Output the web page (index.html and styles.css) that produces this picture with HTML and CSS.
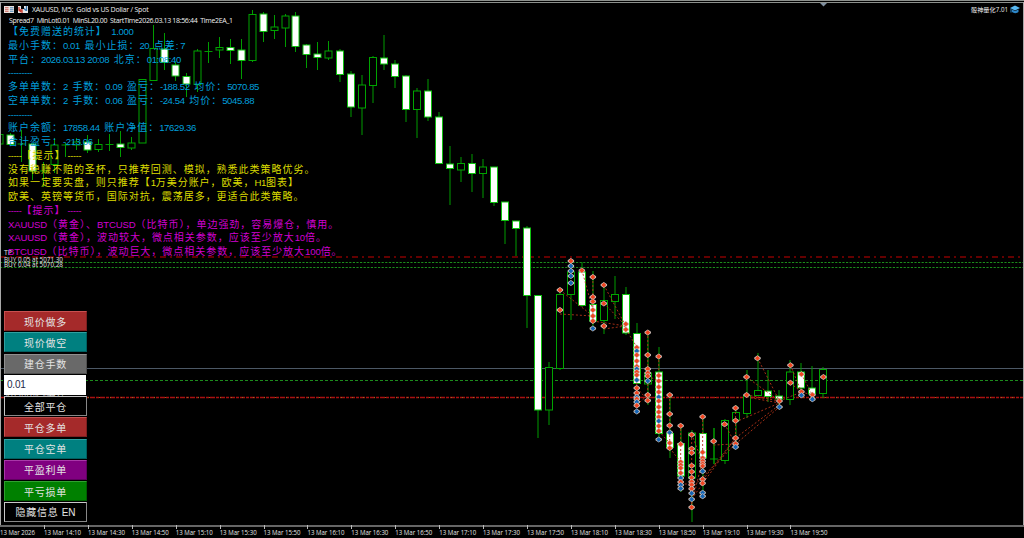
FILE: index.html
```html
<!DOCTYPE html>
<html lang="zh-CN">
<head>
    <meta charset="UTF-8">
    <meta name="viewport" content="width=device-width, initial-scale=1.0">
    <title>XAUUSD, M5</title>
    <link rel="stylesheet" href="styles.css">
</head>
<body>
    <div class="chart">
        <svg id="plot" class="plot" width="1024" height="538" viewBox="0 0 1024 538"></svg>

        <header class="title_bar">
            <svg width="24" height="10" viewBox="0 0 24 10">
                <rect x="0" y="1" width="10" height="7" fill="#e8e0dc" />
                <rect x="1" y="2" width="3.500" height="5" fill="#d08078" />
                <rect x="6" y="2" width="3.500" height="5" fill="#6f9cc0" />
                <path d="M0 3.500h10M0 5.500h10" stroke="#f4e6e2" stroke-width=".6" />
                <path d="M14 1h3v3h3V1h4v7h-10z" fill="#e8e8e8" />
                <path d="M15 2v3h3v3M15 5l2 2" stroke="#c8392b" stroke-width="1.3" fill="none" />
                <path d="M22.500 1v5M20 3.500l2 2" stroke="#3b78b0" stroke-width="1.3" fill="none" />
            </svg>
            <span class="symbol">XAUUSD, M5:&nbsp; Gold vs US Dollar / Spot</span>
            <span class="expert">骰神量化7.01</span>
            <svg width="11" height="9" viewBox="0 0 11 9">
                <path d="M0 3l5-2.500 5 2.500-5 2.500z" fill="#57b7f0" />
                <path d="M2 4.500v2.500c2 1.500 4 1.500 6.500 0V4.500L5 6z" fill="#2c86c8" />
                <path d="M1 3.500v4" stroke="#2c86c8" />
            </svg>
        </header>

        <div class="spread">Spread7&nbsp; MinLot0.01&nbsp; MinSL20.00&nbsp; StartTime2026.03.13 18:56:44&nbsp; Time2EA_1</div>

        <div class="stats">
            <p>【免费赠送的统计】<i>&nbsp; 1.000</i></p>
            <p>最小手数：<i>0.01 &nbsp;</i>最小止损：<i>20 &nbsp;</i>点差<i>: 7</i></p>
            <p>平台：<i>2026.03.13 20:08 &nbsp;</i>北京：<i>01:08:40</i></p>
            <p><i class="rule">---------</i></p>
            <p>多单单数：<i>2 &nbsp;</i>手数：<i>0.09 &nbsp;</i>盈亏：<i>-188.52 &nbsp;</i>均价：<i>5070.85</i></p>
            <p>空单单数：<i>2 &nbsp;</i>手数：<i>0.06 &nbsp;</i>盈亏：<i>-24.54 &nbsp;</i>均价：<i>5045.88</i></p>
            <p><i class="rule">---------</i></p>
            <p>账户余额：<i>17858.44 &nbsp;</i>账户净值：<i>17629.36</i></p>
            <p>合计盈亏：<i>-213.06</i></p>
            <p class="tip"><i class="rule">-----</i>【提示】<i class="rule"> -----</i></p>
            <p class="tip">没有稳赚不赔的圣杯，只推荐回测、模拟，熟悉此类策略优劣。</p>
            <p class="tip">如果一定要实盘，则只推荐【<i>1</i>万美分账户，欧美，<i>H1</i>图表】</p>
            <p class="tip">欧美、英镑等货币，国际对抗，震荡居多，更适合此类策略。</p>
            <p class="warn"><i class="rule">-----</i>【提示】<i class="rule"> -----</i></p>
            <p class="warn"><i>XAUUSD</i>（黄金）、<i>BTCUSD</i>（比特币），单边强劲，容易爆仓，慎用。</p>
            <p class="warn"><i>XAUUSD</i>（黄金），波动较大，微点相关参数，应该至少放大<i>10</i>倍。</p>
            <p class="warn"><i>BTCUSD</i>（比特币），波动巨大，微点相关参数，应该至少放大<i>100</i>倍。</p>
        </div>

        <div class="panel">
            <button class="red">现价做多</button>
            <button class="teal">现价做空</button>
            <button class="gray">建仓手数</button>
            <input type="text" value="0.01">
            <button class="black">全部平仓</button>
            <button class="red">平仓多单</button>
            <button class="teal">平仓空单</button>
            <button class="purple">平盈利单</button>
            <button class="green">平亏损单</button>
            <button class="black">隐藏信息 <i>EN</i></button>
        </div>
    </div>

    <script src="chart.js"></script>
</body>
</html>
```
FILE: styles.css
```css
body {
    margin: 0;
    background-color: #000;
}
.chart {
    position: relative;
    box-sizing: border-box;
    width: 1024px;
    height: 538px;
    overflow: hidden;
    background-color: #000;
    font-family: "Liberation Sans", "Noto Sans CJK SC", sans-serif;
}
.plot {
    position: absolute;
    top: 0;
    left: 0;
}
.plot text {
    font-family: "Open Sans", "Noto Sans", sans-serif;
    font-size: 7px;
    fill: #e4e4e4;
}
.title_bar {
    position: relative;
    display: flex;
    align-items: center;
    height: 11px;
    padding: 4px 3px 0 4px;
    color: #f0f0f0;
    font-family: "Open Sans", "Noto Sans CJK SC", sans-serif;
    font-size: 7px;
}
.symbol {
    flex: 1;
    margin-left: 4px;
    letter-spacing: -0.21px;
}
.expert {
    margin-right: 2px;
    font-size: 6.2px;
}
.spread {
    position: relative;
    height: 9px;
    padding-left: 9px;
    color: #f0f0f0;
    font-family: "Open Sans", sans-serif;
    font-size: 7px;
    line-height: 11px;
    letter-spacing: -0.34px;
    white-space: pre;
}
.stats {
    position: relative;
    padding-left: 8px;
    color: #009fdc;
    font-family: "Noto Sans CJK SC", sans-serif;
    font-size: 10px;
    letter-spacing: 0.98px;
}
.stats p {
    height: 13.75px;
    margin: 0;
    line-height: 13px;
    white-space: pre;
}
.stats i {
    font-family: "Liberation Sans", sans-serif;
    font-size: 9.6px;
    font-style: normal;
    letter-spacing: -0.4px;
}
.stats .rule {
    font-size: 9px;
    letter-spacing: -0.3px;
}
.stats .tip {
    color: #dcdc00;
}
.stats .warn {
    color: #d000d0;
}
.stats .warn i {
    letter-spacing: -0.15px;
}
.stats .warn .rule {
    letter-spacing: -0.3px;
}
.panel {
    position: absolute;
    top: 311px;
    left: 4px;
    display: flex;
    flex-direction: column;
    row-gap: 1.25px;
    width: 83px;
}
.panel button,
.panel input {
    box-sizing: border-box;
    width: 100%;
    height: 20px;
    padding: 0;
    border: 1px solid;
    border-radius: 0;
    color: #e4e4e4;
    font-family: "Noto Sans CJK SC", sans-serif;
    font-size: 10px;
    line-height: 17px;
    letter-spacing: 0.8px;
}
.panel input {
    width: 82px;
    padding-left: 2px;
    border-color: #fff;
    background-color: #fff;
    color: #222a4a;
    font-family: "Liberation Sans", sans-serif;
    letter-spacing: -0.2px;
}
.panel i {
    font-family: "Liberation Sans", sans-serif;
    font-style: normal;
    letter-spacing: 0;
}
.panel .red {
    border-color: #c85050 #7d2020 #7d2020 #c85050;
    background-color: #a52a2a;
}
.panel .teal {
    border-color: #30a0a0 #006060 #006060 #30a0a0;
    background-color: #008080;
}
.panel .gray {
    border-color: #909090 #505050 #505050 #909090;
    background-color: #696969;
}
.panel .purple {
    border-color: #a838a8 #600060 #600060 #a838a8;
    background-color: #800080;
}
.panel .green {
    border-color: #30a030 #006000 #006000 #30a030;
    background-color: #008000;
}
.panel .black {
    border-color: #c8c8c8 #888 #888 #c8c8c8;
    background-color: #000;
}
```
FILE: chart.js
```js
const plot = document.querySelector('#plot')
const STEP = 10.977

// [high, body top, body bottom, low, 1 = falling]
const candles = [
    [134, 134.5, 144, 144, 0], [133, 135, 144.5, 146, 1], [130, 144, 144, 162, 0], [143, 144, 171, 180, 1],
    [162, 171, 171, 187, 0], [138, 145, 164.5, 173, 0], [143, 145, 145, 157, 0], [138, 142, 145, 150, 0],
    [135, 142, 150, 153, 1], [139, 144.5, 149.5, 152, 0], [134, 144.5, 144.5, 151, 0], [131, 144, 147.5, 157, 1],
    [137, 143, 148, 150, 0], [79, 79.5, 143, 143, 0], [25, 48.5, 80.5, 81, 0], [33, 49, 62.5, 70, 1],
    [62, 65, 76, 81, 1], [73, 76.5, 84, 97, 1], [49, 51, 84.5, 92, 0], [42, 51.5, 51.5, 63, 0],
    [37, 47.5, 50, 58, 0], [39, 47.5, 50.5, 64, 1], [39, 50, 60.5, 79, 1], [10, 14.5, 60.5, 62, 0],
    [12, 14, 31.5, 42, 1], [15, 27, 30.5, 39, 0], [14, 16, 28, 47, 0], [12, 16, 46.5, 52, 1],
    [44, 45, 54.5, 68, 1], [42, 54, 57.5, 70, 1], [41, 51, 58, 60, 0], [49, 51, 74.5, 82, 1],
    [71, 74, 107, 117, 1], [75, 85, 108, 135, 0], [56, 57.5, 85.5, 103, 0], [35, 58, 64, 70, 1],
    [60, 64, 76.5, 88, 1], [75, 76, 109.5, 122, 1], [88, 91, 109.5, 138, 0], [79, 91, 117, 121, 1],
    [112, 117, 163.5, 164, 1], [146, 164, 168.5, 205, 1], [157, 163.5, 170, 182, 0], [154, 163.5, 173.5, 192, 1],
    [159, 167, 173.5, 198, 0], [167, 167, 202.5, 206, 1], [202, 202, 220.5, 244, 1], [221, 221, 228.5, 256, 1],
    [226, 228, 295.5, 328, 1], [295, 295.5, 410, 438, 1], [362, 367.5, 410, 425, 0], [288, 294.5, 368.5, 370, 0],
    [260, 272, 294.5, 320, 0], [262, 272, 305.5, 307, 1], [271, 304.5, 321, 330, 1], [283, 300.5, 320.5, 334, 0],
    [276, 294.5, 301.5, 319, 0], [287, 294.5, 333, 335, 1], [323, 333.5, 383.5, 384, 1], [332, 373, 384, 405, 0],
    [347, 372, 433.5, 440, 1], [393, 433.5, 447.5, 458, 1], [425, 443.5, 476, 492, 1], [430, 433, 478, 522, 0],
    [415, 433.5, 458, 498, 1], [428, 459, 459, 464, 0], [419, 420.5, 460.5, 464, 0], [405, 412.5, 420.5, 446, 0],
    [370, 395.5, 413.5, 418, 0], [353, 390.5, 395.5, 396, 0], [370, 391, 396.5, 402, 1], [390, 396, 399, 408, 1],
    [360, 372, 399.5, 405, 0], [363, 372, 388, 395, 1], [366, 388, 394, 400, 1], [367, 369.5, 393.5, 398, 0]
]

// deals per bar, negative = blue arrow
const deals = {
    51: [290, 310],
    52: [261, -266, -271, -276, -283],
    53: [270.5],
    54: [277, 297, 301.5, 310, 316, 321, -328.5],
    55: [285, 303.5, 326],
    57: [324, 329.5],
    58: [347.5, -351, 355, 361, 366.5, -369, 372, 375, -380, 388, 393, -397, 399, -402, 405.5, -411.5],
    59: [332.5, 355, 369, 373, 376, -381, 395, 400.5],
    60: [356.5, 375.5, 381, 387, 392, -397, 401, 407, 412, 417, -421, 426, 431, -439.5],
    61: [395, 414, 425.5, -432.5, 443, 448],
    62: [425.7, 444.3, 462, 465, 468, 473, -478, 482, -485, -488.5],
    63: [434.7, 448.7, 452.7, 465.7, 471.7, 477.7, 481.7, 484.7, 488.7, -493.3, -499.3, 507.3],
    64: [416.7, 452.3, 458, 461, 463.7, 466, -471.3, 479.3, 483.3, -492.7, -496.3],
    65: [441.3],
    66: [424.3],
    67: [408, 420.7, 438, 443.7, -447],
    68: [377, 395],
    69: [358.3],
    71: [401, -407],
    72: [365.3, 382.7],
    73: [374.3, 391.7, -395.3],
    74: [394.7, -399.3],
    75: [377]
}

// [from bar, y, to bar, y]
const links = [
    [51, 290, 54, 316], [51, 314, 54, 316], [53, 270, 54, 310], [54, 277, 54, 321], [54, 321, 57, 326],
    [55, 303, 57, 326], [55, 285, 57, 326], [55, 329, 57, 326], [57, 329, 58, 347], [58, 347, 58, 405],
    [58, 388, 59, 400], [58, 405, 59, 395], [59, 332, 59, 400], [59, 376, 60, 381], [60, 356, 60, 436],
    [60, 431, 61, 443], [61, 395, 61, 448], [61, 448, 62, 462], [62, 425, 62, 488], [62, 484, 63, 484],
    [63, 434, 63, 507], [63, 434, 64, 463], [64, 416, 64, 484], [63, 504, 64, 460], [63, 499, 67, 438],
    [63, 488, 67, 444], [64, 480, 67, 438], [65, 445, 67, 444], [66, 424, 67, 444], [67, 408, 67, 447],
    [67, 422, 71, 403], [67, 438, 71, 405], [67, 444, 71, 407], [68, 377, 71, 401], [68, 395, 71, 401],
    [68, 397, 71, 403], [69, 358, 71, 401], [71, 401, 73, 392], [72, 365, 73, 392], [72, 383, 73, 392],
    [73, 374, 74, 395], [73, 392, 74, 395]
]

const x = i => 0.1 + i * STEP
let out = ''

function hline(y, color, dash, width = 1) {
    out += `<path d="M0 ${y}H1024" stroke="${color}" stroke-width="${width}" stroke-dasharray="${dash}"/>`
}
function label(tx, ty, str, len) {
    out += `<text x="${tx}" y="${ty}" textLength="${len}" lengthAdjust="spacingAndGlyphs">${str}</text>`
}

hline(257, '#640000', '6 4 2 4', 2)
hline(262.5, '#1c8c1c', '2.2 1.4')
hline(267.5, '#1c8c1c', '2.2 1.4')
out += '<path d="M0 368.500H1024" stroke="#4c5866"/>'
hline(380.5, '#1c8c1c', '3 2')
hline(397.5, '#a81010', '5 1 3 1', 1.4)
hline(397.5, '#8c7020', '1 10')

candles.forEach((c, i) => {
    const cx = Math.round(x(i)) - 0.5 + (i > 30 ? 0.5 : 0)
    const color = c[4] ? '#10c010' : '#00a400'
    out += `<path d="M${cx} ${c[0]}V${c[1]}M${cx} ${c[2]}V${c[3]}" stroke="#009c00"/>`
    if (c[2] - c[1] < 1) {
        out += `<path d="M${cx} ${c[0]}V${c[3]}M${cx - 4} ${c[1]}h8" stroke="#009c00"/>`
    } else {
        out += `<rect x="${cx - 3.5}" y="${c[1]}" width="7" height="${c[2] - c[1]}" fill="${c[4] ? '#fff' : '#000'}" stroke="${color}"/>`
    }
})

links.forEach(l => {
    out += `<path d="M${x(l[0])} ${l[1]}L${x(l[2])} ${l[3]}" stroke="#b43418" stroke-width=".9" stroke-dasharray="2 2"/>`
})

Object.keys(deals).forEach(i => {
    deals[i].forEach(v => {
        const y = Math.abs(v)
        out += `<path d="M${x(i)} ${y - 3}l3.200 2.200v1.600l-3.200 2.200l-3.200-2.200v-1.600z" fill="#d0c4be"/>`
        out += `<path d="M${x(i)} ${y - 2.5}l2.500 2.500l-2.500 2.500l-2.500-2.500z" fill="${v < 0 ? '#1464b4' : '#f04420'}"/>`
    })
})

label(4, 255, 'TP', 8)
label(4, 261.5, 'BUY 0.05 at 5071.30', 59)
label(4, 266.5, 'BUY 0.04 at 5070.28', 59)
label(4, 379.5, 'SELL 0.03 at 5047.92', 60)
label(4, 396.5, 'SELL 0.03 at 5044.21', 60)

// window frame and time axis
out += '<path d="M0 .5H1024M0 2.500H1024" stroke="#8c908c"/><path d="M.5 2V526M1023.500 2V526" stroke="#a8a8a8"/>'
out += '<path d="M820 3h7l-3.500 3.500z" fill="#8090a0"/>'
out += '<path d="M0 526H1024" stroke="#666" stroke-width="2"/>'
label(0, 534.5, '13 Mar 2026', 35)
for (let i = 4, m = 850; i <= 72; i += 4, m += 20) {
    const time = Math.floor(m / 60) + ':' + String(m % 60).padStart(2, '0')
    out += `<path d="M${Math.round(x(i)) + 0.5} 525v4" stroke="#bbb"/>`
    label(x(i), 534.5, '13 Mar ' + time, 37)
}

plot.innerHTML = out
```
